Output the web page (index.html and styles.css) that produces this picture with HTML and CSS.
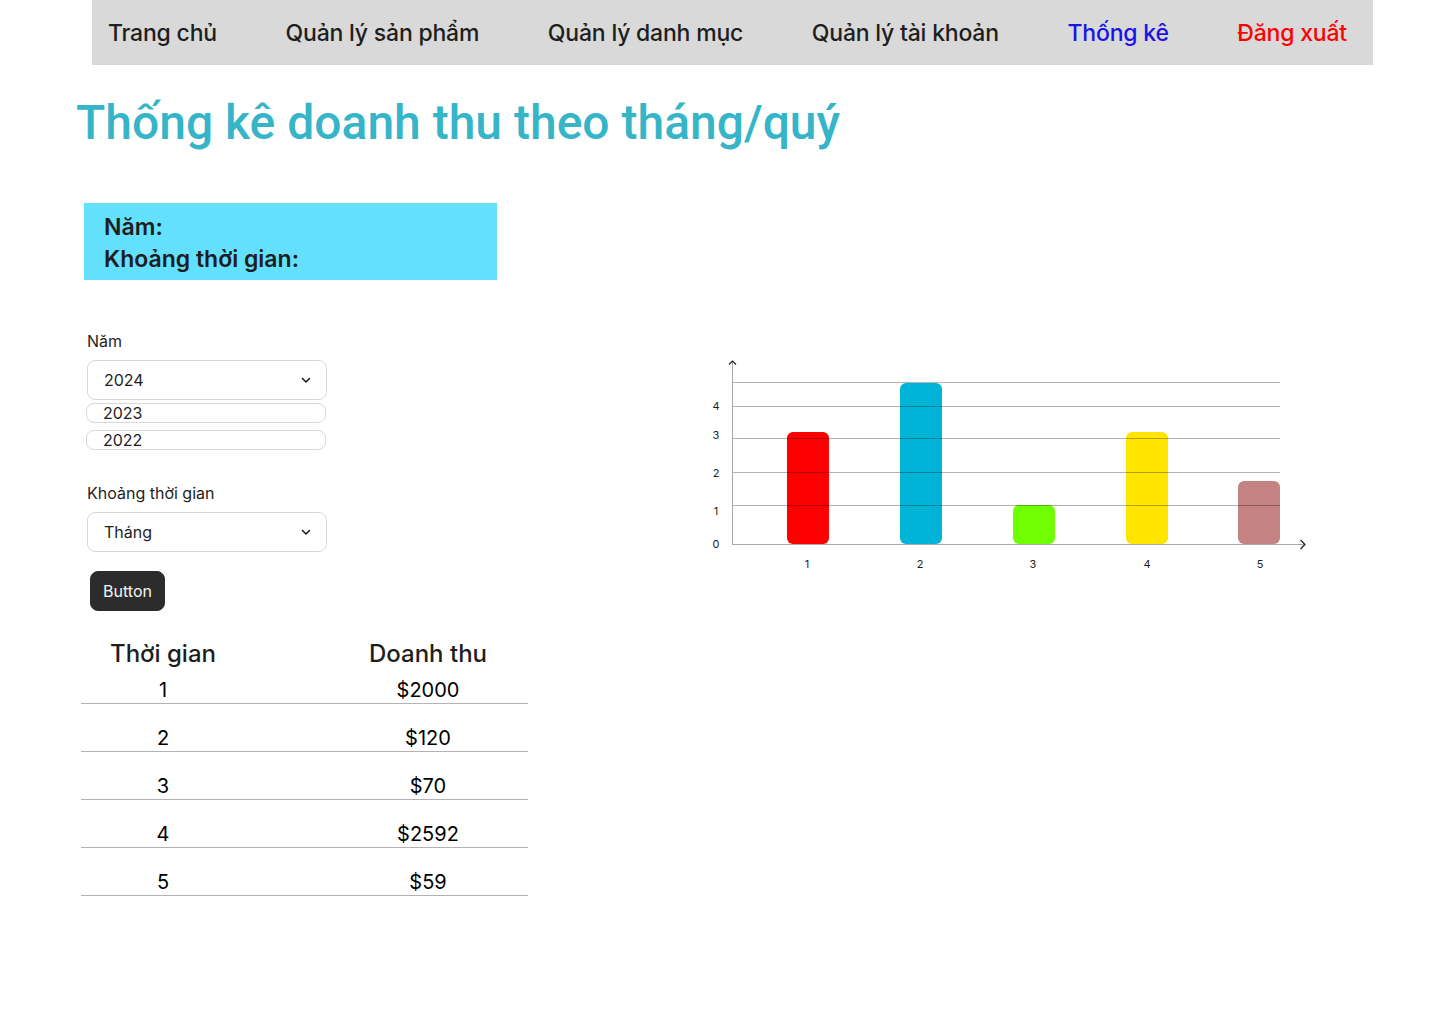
FILE: index.html
```html
<!DOCTYPE html>
<html lang="vi">
<head>
<meta charset="utf-8">
<title>Thống kê doanh thu</title>
<link rel="stylesheet" href="styles.css">
</head>
<body>
<nav class="topnav">
  <a class="nav-item">Trang chủ</a>
  <a class="nav-item">Quản lý sản phẩm</a>
  <a class="nav-item">Quản lý danh mục</a>
  <a class="nav-item">Quản lý tài khoản</a>
  <a class="nav-item nav-active">Thống kê</a>
  <a class="nav-item nav-logout">Đăng xuất</a>
</nav>
<main class="page">
  <h1 class="title">Thống kê doanh thu theo tháng/quý</h1>
  <div class="content">
    <section class="left">
      <div class="summary">
        <div>Năm:</div>
        <div>Khoảng thời gian:</div>
      </div>
      <div class="field field-year">
        <div class="label">Năm</div>
        <div class="select">
          <span>2024</span>
          <svg class="chev" width="16" height="16" viewBox="0 0 16 16"><path d="M4.5 6.5 L8 10 L11.5 6.5" fill="none" stroke="#1e1e1e" stroke-width="1.6" stroke-linecap="round" stroke-linejoin="round"/></svg>
        </div>
        <div class="option">2023</div>
        <div class="option">2022</div>
      </div>
      <div class="field field-period">
        <div class="label">Khoảng thời gian</div>
        <div class="select">
          <span>Tháng</span>
          <svg class="chev" width="16" height="16" viewBox="0 0 16 16"><path d="M4.5 6.5 L8 10 L11.5 6.5" fill="none" stroke="#1e1e1e" stroke-width="1.6" stroke-linecap="round" stroke-linejoin="round"/></svg>
        </div>
      </div>
      <button class="btn">Button</button>
      <div class="table">
        <div class="th c1">Thời gian</div><div class="th c2">Doanh thu</div>
        <div class="td first c1">1</div><div class="td first c2">$2000</div>
        <div class="td c1">2</div><div class="td c2">$120</div>
        <div class="td c1">3</div><div class="td c2">$70</div>
        <div class="td c1">4</div><div class="td c2">$2592</div>
        <div class="td c1">5</div><div class="td c2">$59</div>
      </div>
    </section>
    <div class="chart">
      <svg width="620" height="230" viewBox="0 0 620 230">
        <rect x="87" y="82" width="42" height="112" rx="6" fill="#ff0000"/>
        <rect x="200" y="33" width="42" height="161" rx="6" fill="#00b4d8"/>
        <rect x="313" y="155" width="42" height="39" rx="6" fill="#70ff00"/>
        <rect x="426" y="82" width="42" height="112" rx="6" fill="#ffe500"/>
        <rect x="538" y="131" width="42" height="63" rx="6" fill="#c48282"/>
        <g stroke="rgba(0,0,0,0.3)" stroke-width="1">
          <line x1="32" y1="32.5" x2="580" y2="32.5"/>
          <line x1="32" y1="56.5" x2="580" y2="56.5"/>
          <line x1="32" y1="88.5" x2="580" y2="88.5"/>
          <line x1="32" y1="122.5" x2="580" y2="122.5"/>
          <line x1="32" y1="155.5" x2="580" y2="155.5"/>
        </g>
        <g stroke="#a8a8a8" stroke-width="1" fill="none">
          <line x1="32.5" y1="11" x2="32.5" y2="194"/>
          <line x1="32" y1="194.5" x2="604" y2="194.5"/>
        </g>
        <g stroke="#1e1e1e" stroke-width="1.2" fill="none">
          <path d="M29 14.5 L32.5 11 L36 14.5"/>
          <path d="M600.5 190 L605 194.5 L600.5 199"/>
        </g>
        <g class="axis-text" font-size="11" fill="#1e1e1e" text-anchor="middle">
          <text x="16" y="60">4</text>
          <text x="16" y="89">3</text>
          <text x="16" y="127">2</text>
          <text x="16" y="165">1</text>
          <text x="16" y="198">0</text>
          <text x="107" y="218">1</text>
          <text x="220" y="218">2</text>
          <text x="333" y="218">3</text>
          <text x="447" y="218">4</text>
          <text x="560" y="218">5</text>
        </g>
      </svg>
    </div>
  </div>
</main>
</body>
</html>
```

FILE: styles.css
```css
* { box-sizing: border-box; }
html, body { margin: 0; padding: 0; background: #ffffff; }
body {
  font-family: Inter, "Noto Sans", "Liberation Sans", sans-serif;
  color: #1e1e1e;
}
.topnav {
  margin-left: 92px;
  width: 1281px;
  height: 65px;
  background: #d9d9d9;
  display: flex;
  align-items: center;
  justify-content: space-between;
  padding: 0 26px 0 16px;
}
.nav-item {
  font-size: 23px;
  font-weight: 500;
  letter-spacing: -0.2px;
  color: #1e1e1e;
  line-height: 1;
  white-space: nowrap;
  padding-top: 2px;
}
.nav-active { color: #1a12e8; }
.nav-logout { color: #ff0000; }

.page { padding-left: 76px; }
.title {
  margin: 30px 0 0 0;
  font-family: Roboto, "Liberation Sans", sans-serif;
  font-weight: 500;
  font-size: 48px;
  line-height: 56px;
  color: #36b5c9;
}
.content {
  display: flex;
  align-items: flex-start;
}
.left {
  width: 452px;
  margin-left: 5px;
  padding-top: 52px;
}
.summary {
  margin-left: 3px;
  width: 413px;
  height: 77px;
  background: #62e0fc;
  padding: 8px 0 0 20px;
  font-size: 23px;
  font-weight: 600;
  line-height: 32px;
  color: #1e1e1e;
}
.field { margin-left: 6px; }
.field-year { margin-top: 50px; }
.field-period { margin-top: 32px; }
.label {
  font-size: 16px;
  line-height: 22px;
  margin-bottom: 8px;
  color: #1e1e1e;
}
.select {
  width: 240px;
  height: 40px;
  border: 1px solid #d9d9d9;
  border-radius: 8px;
  display: flex;
  align-items: center;
  justify-content: space-between;
  padding: 0 12px 0 16px;
  font-size: 16px;
  color: #1e1e1e;
}
.chev { display: block; }
.option {
  width: 240px;
  height: 20px;
  margin-left: -1px;
  margin-top: 3px;
  border: 1px solid #d9d9d9;
  border-radius: 8px;
  padding-left: 16px;
  font-size: 16px;
  line-height: 18px;
  color: #1e1e1e;
}
.option + .option { margin-top: 7px; }
.btn {
  margin: 19px 0 0 9px;
  width: 75px;
  height: 40px;
  border: 1px solid #2c2c2c;
  border-radius: 8px;
  background: #2c2c2c;
  color: #f5f5f5;
  font-family: Inter, "Noto Sans", sans-serif;
  font-size: 16px;
  padding: 0;
  display: block;
}
.table {
  margin-top: 27px;
  width: 447px;
  display: grid;
  grid-template-columns: 164px 283px;
}
.th {
  font-size: 24px;
  font-weight: 500;
  line-height: 32px;
  height: 32px;
  text-align: center;
}
.td {
  font-size: 20px;
  line-height: 24px;
  text-align: center;
  border-bottom: 1px solid #b3b3b3;
  height: 48px;
  padding-top: 22px;
  color: #000;
}
.td.first { height: 34px; padding-top: 8px; }
.c1 { padding-left: 0; }
.c2 { padding-left: 83px; padding-right: 0; }
.chart {
  margin-left: 167px;
  margin-top: 199px;
}
.chart svg { display: block; }
.axis-text { font-family: Inter, "Noto Sans", sans-serif; }
```
